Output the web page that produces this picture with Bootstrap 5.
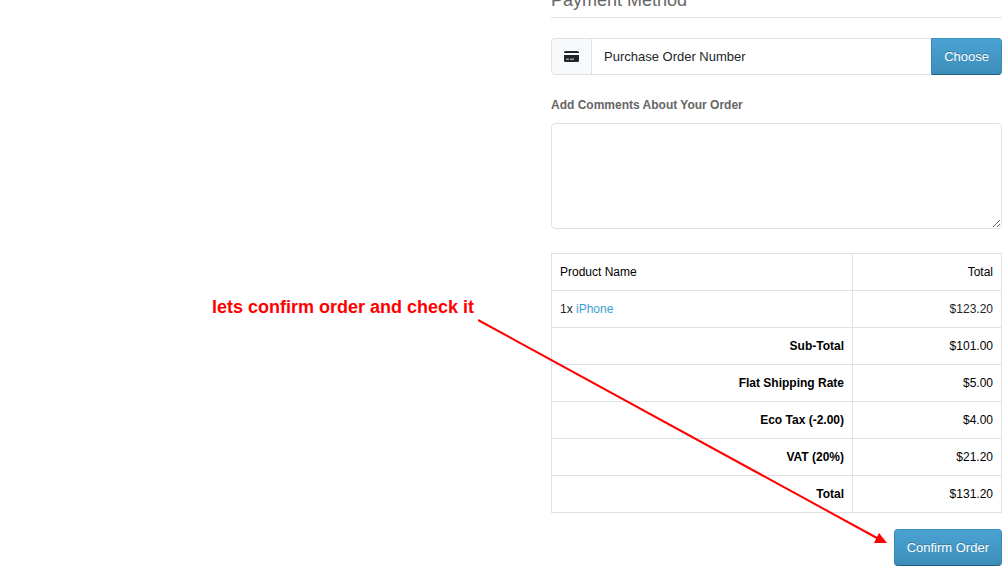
<!DOCTYPE html>
<html lang="en">
<head>
<meta charset="utf-8">
<meta name="viewport" content="width=device-width, initial-scale=1">
<title>Checkout</title>
<link href="https://cdn.jsdelivr.net/npm/bootstrap@5.3.0/dist/css/bootstrap.min.css" rel="stylesheet">
<style>
  body { font: 400 13px/20px "Liberation Sans", Arial, sans-serif; color: #666; background: #fff; }
  .checkout { display: grid; grid-template-columns: 551fr 451fr; padding-right: 6px; overflow: hidden; }
  .note { color: #f00; font-size: 18px; line-height: 24px; font-weight: 700; padding: 295px 77px 0 0; }
  .arrow { right: 120px; top: 318px; pointer-events: none; }
  .pay-title { font-size: 18px; line-height: 22px; font-weight: 400; color: #666; margin: -11px 0 20px; padding-bottom: 6px; border-bottom: 1px solid #dee2e6; }
  .input-group-text { background: #f8f9fa; border-color: #dee2e6; padding: 0 12px; color: #212529; }
  .form-control, .form-control:focus { font-size: 13px; line-height: 23px; border-color: #dee2e6; border-radius: 4px; color: #212529; }
  .input-group > .input-group-text { border-radius: 4px 0 0 4px; }
  .comments-label { font-size: 12px; margin-top: 20px; }
  .comments { height: 106px; }
  .btn-shop { font-size: 13px; line-height: 23px; padding: 6px 12px; border-radius: 4px; color: #fff;
    background: linear-gradient(#4aa3d4, #3e8db9); border: 1px solid; border-color: #3a93c4 #3787b4 #235f80;
    text-shadow: 0 -1px 0 rgba(0,0,0,.25); }
  .btn-shop:hover { color: #fff; background: #3e8db9; }
  .totals { font-size: 12px; line-height: 20px; --bs-table-color: #000; border-color: #dee2e6; table-layout: fixed; }
  .totals td, .totals th { padding: 8px; }
  .totals tr > :last-child { width: 149px; }
  .totals a { color: #3d9dd1; text-decoration: none; }
  .totals .item-row { --bs-table-color: #212529; color: #212529; }
</style>
</head>
<body>
<main class="checkout position-relative">
  <div class="note text-end">lets confirm order and check it</div>
  <section>
    <h2 class="pay-title">Payment Method</h2>
    <div class="input-group">
      <span class="input-group-text">
        <svg width="15" height="13" viewBox="0 0 15 13" aria-hidden="true">
          <path fill="#212529" d="M1.500 1h12q1.500 0 1.500 1.500V3H0v-.5Q0 1 1.500 1zM0 5h15v5.500q0 1.500-1.500 1.500h-12Q0 12 0 10.500z"/>
          <path fill="#9b9fa3" d="M2 8.500h3v1.500H2zM6 8.500h4v1.500H6z"/>
        </svg>
      </span>
      <input type="text" class="form-control" value="Purchase Order Number" aria-label="Payment method" readonly>
      <button type="button" class="btn btn-shop">Choose</button>
    </div>
    <label for="comments" class="d-block fw-bold mb-2 comments-label">Add Comments About Your Order</label>
    <textarea id="comments" class="form-control comments mb-4"></textarea>
    <table class="table table-bordered totals mb-3">
      <thead>
        <tr><td>Product Name</td><td class="text-end">Total</td></tr>
      </thead>
      <tbody>
        <tr class="item-row"><td>1x <a href="#">iPhone</a></td><td class="text-end">$123.20</td></tr>
        <tr><th class="text-end" scope="row">Sub-Total</th><td class="text-end">$101.00</td></tr>
        <tr><th class="text-end" scope="row">Flat Shipping Rate</th><td class="text-end">$5.00</td></tr>
        <tr><th class="text-end" scope="row">Eco Tax (-2.00)</th><td class="text-end">$4.00</td></tr>
        <tr><th class="text-end" scope="row">VAT (20%)</th><td class="text-end">$21.20</td></tr>
        <tr><th class="text-end" scope="row">Total</th><td class="text-end">$131.20</td></tr>
      </tbody>
    </table>
    <div class="text-end pb-2">
      <button type="button" class="btn btn-shop">Confirm Order</button>
    </div>
  </section>
  <svg class="arrow position-absolute" width="410" height="228" viewBox="0 0 410 228" aria-hidden="true">
    <path d="M0 2L399 220" stroke="#f00" stroke-width="2" fill="none"/>
    <path d="M409 225L396 225L401 215z" fill="#f00"/>
  </svg>
</main>
<script src="https://cdn.jsdelivr.net/npm/bootstrap@5.3.0/dist/js/bootstrap.bundle.min.js"></script>
</body>
</html>
